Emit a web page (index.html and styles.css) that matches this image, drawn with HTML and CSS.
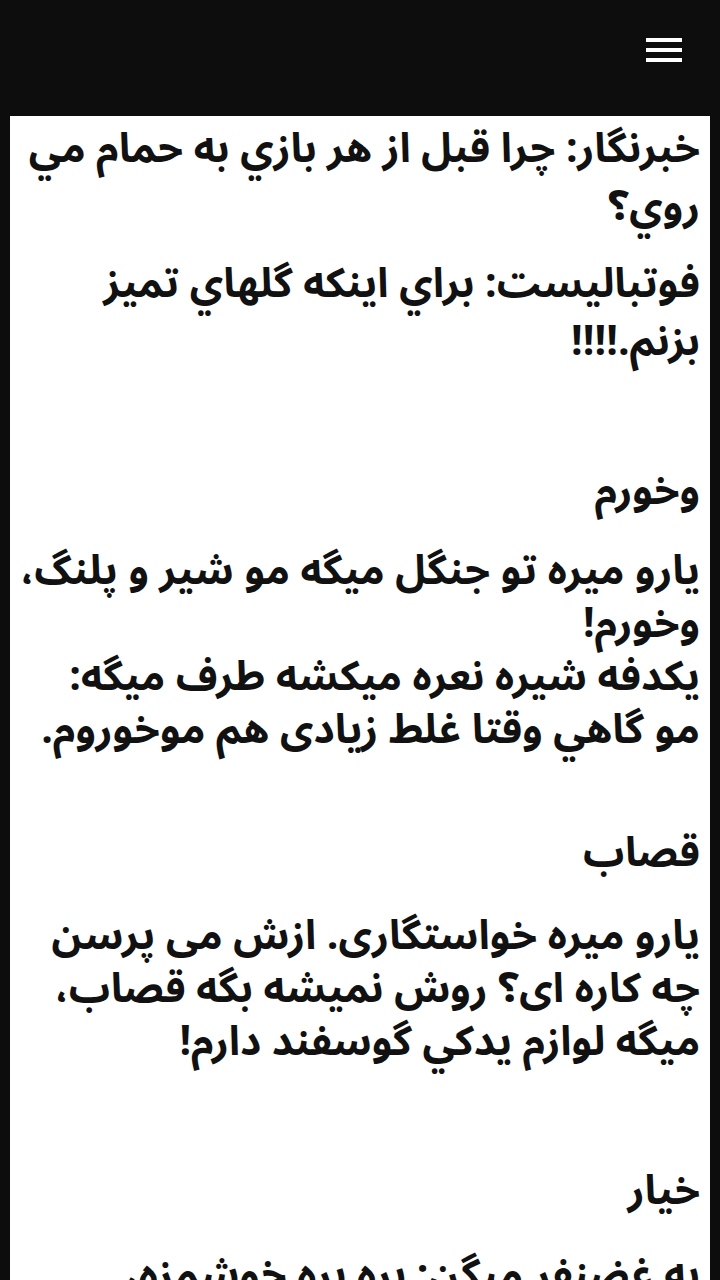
FILE: index.html
```html
<!DOCTYPE html>
<html lang="fa" dir="rtl">
<head>
<meta charset="utf-8">
<link rel="stylesheet" href="styles.css">
</head>
<body>
<header class="topbar">
  <button class="menu" aria-label="منو">
    <span></span><span></span><span></span>
  </button>
</header>
<main class="panel">
  <section class="joke first">
    <p>خبرنگار: چرا قبل از هر بازي به حمام مي روي؟</p>
    <p>فوتباليست: براي اينكه گلهاي تميز بزنم.!!!!</p>
  </section>
  <section class="joke">
    <h2>وخورم</h2>
    <p>يارو ميره تو جنگل ميگه مو شير و پلنگ، وخورم!<br>يكدفه شيره نعره ميكشه طرف ميگه:<br>مو گاهي وقتا غلط زيادی هم موخوروم.</p>
  </section>
  <section class="joke tight">
    <h2>قصاب</h2>
    <p>يارو ميره خواستگاری. ازش می پرسن چه کاره ای؟ روش نميشه بگه قصاب، ميگه لوازم يدكي گوسفند دارم!</p>
  </section>
  <section class="joke last">
    <h2>خيار</h2>
    <p>به غضنفر ميگن: بره بره خوشمزه، ميخوري؟</p>
  </section>
</main>
</body>
</html>
```

FILE: styles.css
```css
html, body {
  margin: 0;
  padding: 0;
  background: #0d0d0d;
}

body {
  font-family: "Noto Sans Arabic", "DejaVu Sans", "Noto Sans", sans-serif;
  color: #111;
  direction: rtl;
}

.topbar {
  height: 116px;
  display: flex;
  align-items: flex-start;
  justify-content: flex-start;
  padding-right: 38px;
  box-sizing: border-box;
}

.menu {
  margin-top: 38px;
  width: 36px;
  padding: 0;
  border: 0;
  background: none;
  display: flex;
  flex-direction: column;
  gap: 6px;
}

.menu span {
  display: block;
  height: 4px;
  background: #fff;
}

.panel {
  background: #fff;
  margin: 0 10px;
  padding: 4px 10px 40px 8px;
  min-height: 1200px;
}

.joke p,
.joke h2 {
  margin: 0;
  font-size: 41px;
  font-weight: bold;
  line-height: 53px;
}

.joke h2 {
  line-height: 55px;
  margin-bottom: 26px;
}

.joke {
  margin-top: 93px;
}

.joke.first p {
  line-height: 58px;
}

.joke.first p + p {
  margin-top: 19px;
}

.joke.tight {
  margin-top: 69px;
}

.joke.tight h2 {
  margin-bottom: 29px;
}

.joke.last {
  margin-top: 95px;
}

.joke.last h2 {
  margin-bottom: 30px;
}

.joke.first {
  margin-top: 0;
}
```
